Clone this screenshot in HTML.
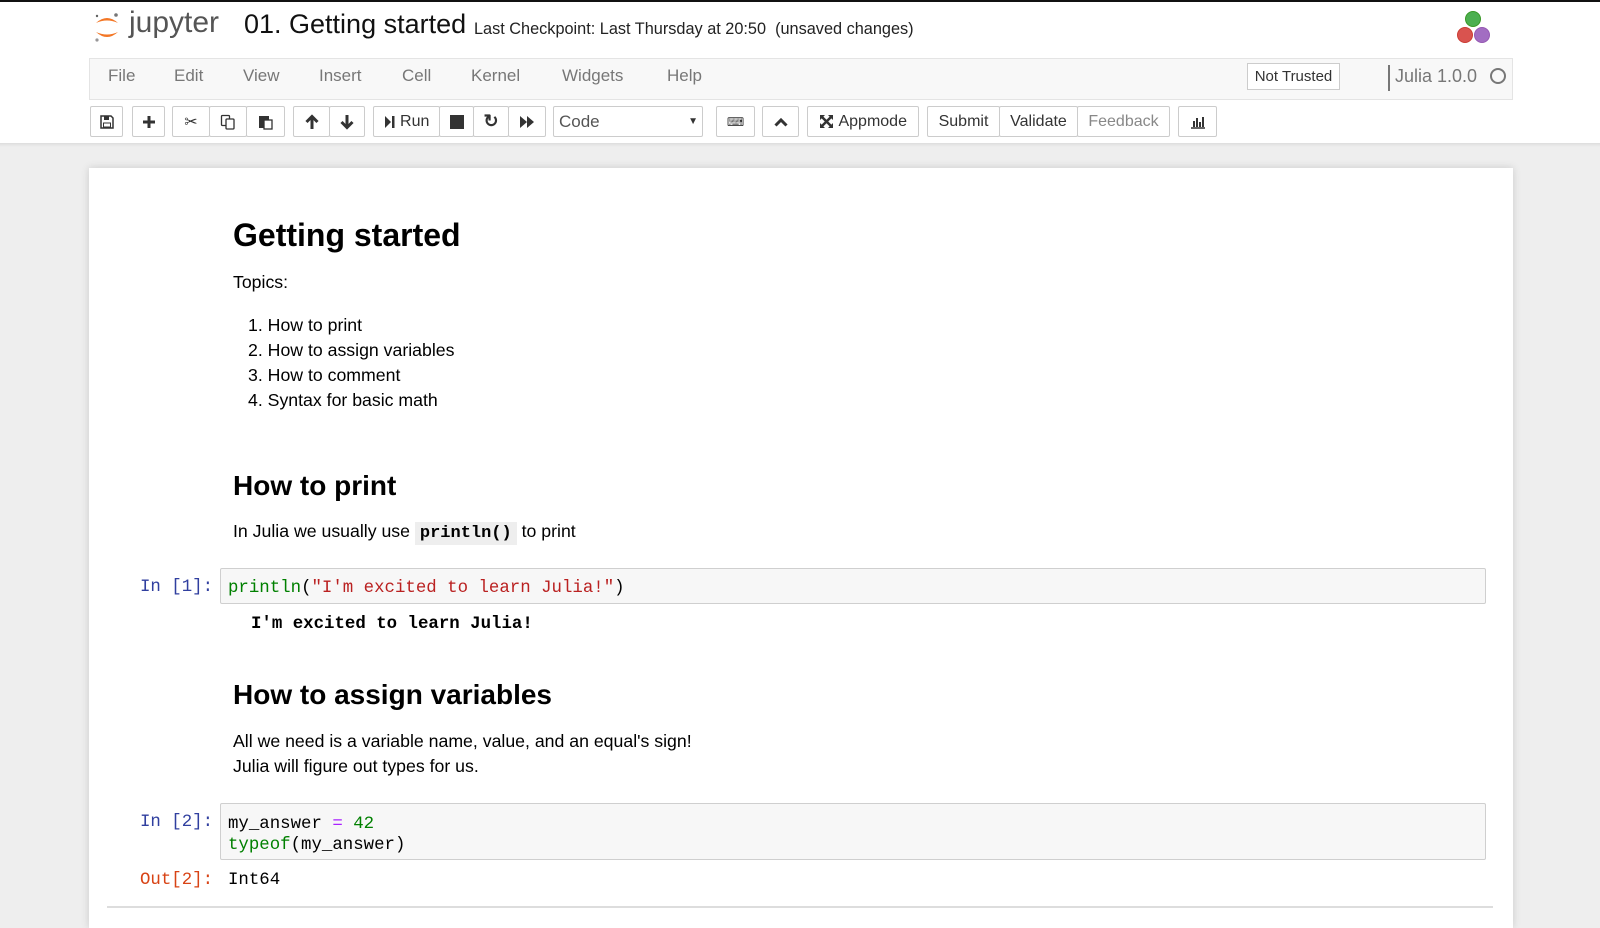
<!DOCTYPE html>
<html><head><meta charset="utf-8"><style>
*{box-sizing:border-box;margin:0;padding:0}
body{width:1600px;height:908px;overflow:hidden;background:#eee;font-family:"Liberation Sans",sans-serif;color:#000;position:relative}
.abs{position:absolute}
#hdr{position:absolute;left:0;top:0;width:1600px;height:58px;background:#fff;border-top:2px solid #111}
#menu{position:absolute;left:89px;top:58px;width:1424px;height:42px;background:#f8f8f8;border:1px solid #e4e4e4}
#menu span{position:absolute;top:7px;font-size:17px;color:#777}
#tbbg{position:absolute;left:0;top:58px;width:1600px;height:86px;background:#fff;z-index:-1}
.btn{position:absolute;top:106px;height:31px;border:1px solid #ccc;background:#fff;border-radius:2px;font-size:16px;display:flex;align-items:center;justify-content:center;color:#333}
.sh{position:absolute;left:0;top:143px;width:1600px;height:4px;background:linear-gradient(#ddd,#eee)}
#nb{position:absolute;left:89px;top:168px;width:1424px;height:760px;background:#fff;box-shadow:0 0 8px rgba(0,0,0,.15)}
.t{position:absolute;font-size:17.7px;color:#000;white-space:nowrap}
h1,h2{position:absolute;font-weight:bold;white-space:nowrap}
.mono{font-family:"Liberation Mono",monospace;font-size:17.4px}
.cell{position:absolute;left:220px;width:1266px;background:#f7f7f7;border:1px solid #cfcfcf;border-radius:2px}
.pr{position:absolute;left:140px;color:#303f9f}
</style></head><body>
<div id="tbbg"></div>
<div id="hdr">
<svg class="abs" style="left:92px;top:8px" width="30" height="34" viewBox="0 0 30 34"><path d="M4 13 Q15 3 26 13 Q15 8 4 13Z" fill="#f37726"/><path d="M4 22 Q15 32 26 22 Q15 27 4 22Z" fill="#f37726"/><circle cx="24" cy="5" r="1.8" fill="#767677"/><circle cx="5" cy="30" r="1.6" fill="#989798"/><circle cx="5" cy="6" r="1.2" fill="#616262"/></svg>
<div class="abs" style="left:129px;top:4px;font-size:30px;color:#555">jupyter</div>
<div class="abs" style="left:244px;top:7px;font-size:27px;color:#111">01. Getting started</div>
<div class="abs" style="left:474px;top:18px;font-size:16.3px;color:#222">Last Checkpoint: Last Thursday at 20:50 &nbsp;(unsaved changes)</div>
<svg class="abs" style="left:1455px;top:8px" width="38" height="36"><circle cx="18" cy="9" r="7.5" fill="#4caf50" stroke="#389826"/><circle cx="10" cy="25" r="7.5" fill="#d9534f" stroke="#cb3c33"/><circle cx="27" cy="25" r="7.5" fill="#a26dc2" stroke="#9558b2"/></svg>
</div>
<div id="menu">
<span style="left:18px">File</span><span style="left:84px">Edit</span><span style="left:153px">View</span><span style="left:229px">Insert</span><span style="left:312px">Cell</span><span style="left:381px">Kernel</span><span style="left:472px">Widgets</span><span style="left:577px">Help</span>
<div class="abs" style="left:1157px;top:4px;width:93px;height:27px;border:1px solid #ccc;background:#fff;font-size:15px;color:#333;text-align:center;line-height:25px">Not Trusted</div>
<div class="abs" style="left:1298px;top:6px;width:2px;height:26px;background:#777"></div>
<span style="left:1305px;top:7px;font-size:18px;color:#777">Julia 1.0.0</span>
<div class="abs" style="left:1400px;top:9px;width:16px;height:16px;border:2px solid #777;border-radius:50%"></div>
</div>
<div class="btn" style="left:90px;width:33px"><svg width="14" height="14" viewBox="0 0 14 14"><path d="M1 1h10l2 2v10H1z" fill="none" stroke="#333" stroke-width="1.5"/><rect x="4" y="1" width="5" height="4" fill="#333"/><rect x="3.5" y="8" width="7" height="4" fill="none" stroke="#333"/></svg></div>
<div class="btn" style="left:132px;width:33px"><svg width="14" height="14"><path d="M7 1v12M1 7h12" stroke="#333" stroke-width="3"/></svg></div>
<div class="btn" style="left:172px;width:38px">✂</div>
<div class="btn" style="left:209px;width:38px"><svg width="16" height="16"><rect x="1.5" y="1.5" width="8" height="10" rx="1" fill="none" stroke="#333" stroke-width="1.3"/><rect x="6" y="5" width="8" height="10" rx="1" fill="#fff" stroke="#333" stroke-width="1.3"/></svg></div>
<div class="btn" style="left:246px;width:39px"><svg width="16" height="16"><rect x="1" y="2" width="10" height="12" fill="#333"/><rect x="6" y="6" width="8" height="9" fill="#fff" stroke="#333" stroke-width="1.3"/></svg></div>
<div class="btn" style="left:293px;width:37px"><svg width="14" height="16"><path d="M7 15V3M1.5 8L7 2.5 12.5 8" fill="none" stroke="#333" stroke-width="3"/></svg></div>
<div class="btn" style="left:329px;width:36px"><svg width="14" height="16"><path d="M7 1v12M1.5 8L7 13.5 12.5 8" fill="none" stroke="#333" stroke-width="3"/></svg></div>
<div class="btn" style="left:373px;width:67px"><svg width="12" height="14"><path d="M1 1l6 6-6 6z" fill="#333"/><rect x="8" y="1" width="2.5" height="12" fill="#333"/></svg>&nbsp;Run</div>
<div class="btn" style="left:439px;width:35px"><svg width="14" height="14"><rect width="14" height="14" fill="#333"/></svg></div>
<div class="btn" style="left:473px;width:36px;font-weight:bold;font-size:18px">↻</div>
<div class="btn" style="left:508px;width:38px"><svg width="16" height="14"><path d="M1 1l7 6-7 6zM8 1l7 6-7 6z" fill="#333"/></svg></div>
<div class="btn" style="left:553px;width:150px;justify-content:flex-start;padding-left:5px;font-size:17px;color:#555">Code<span style="position:absolute;right:4px;font-size:10px;color:#333">▼</span></div>
<div class="btn" style="left:716px;width:39px;font-size:12px">⌨</div>
<div class="btn" style="left:762px;width:37px"><svg width="14" height="10"><path d="M1.5 8.5L7 3l5.5 5.5" fill="none" stroke="#333" stroke-width="3"/></svg></div>
<div class="btn" style="left:807px;width:112px"><svg width="15" height="15"><path d="M2 2l11 11M13 2L2 13" stroke="#333" stroke-width="2.5"/><path d="M1 1h5L1 6zM14 1v5L9 1zM1 14V9l5 5zM14 14H9l5-5z" fill="#333"/></svg>&nbsp;Appmode</div>
<div class="btn" style="left:927px;width:73px">Submit</div>
<div class="btn" style="left:999px;width:79px">Validate</div>
<div class="btn" style="left:1077px;width:93px;color:#888">Feedback</div>
<div class="btn" style="left:1178px;width:39px"><svg width="16" height="14"><path d="M1 13h14" stroke="#333" stroke-width="1.5"/><path d="M4 12V6M7 12V3M10 12V7M13 12V2" stroke="#333" stroke-width="2"/></svg></div>
<div class="sh"></div>
<div id="nb"></div>
<h1 style="left:233px;top:217px;font-size:32px">Getting started</h1>
<div class="t" style="left:233px;top:272px">Topics:</div>
<div class="t" style="left:248px;top:315px">1. How to print</div>
<div class="t" style="left:248px;top:340px">2. How to assign variables</div>
<div class="t" style="left:248px;top:365px">3. How to comment</div>
<div class="t" style="left:248px;top:390px">4. Syntax for basic math</div>
<h2 style="left:233px;top:470px;font-size:28px">How to print</h2>
<div class="t" style="left:233px;top:521px">In Julia we usually use <span class="mono" style="background:#eee;padding:2px 5px;font-weight:bold;font-size:17px">println()</span> to print</div>
<div class="pr mono" style="top:578px">In [1]:</div>
<div class="cell" style="top:568px;height:36px"><div class="mono" style="position:absolute;left:7px;top:10px"><span style="color:#008000">println</span>(<span style="color:#ba2121">"I'm excited to learn Julia!"</span>)</div></div>
<div class="mono abs" style="left:251px;top:615px;font-weight:bold">I'm excited to learn Julia!</div>
<h2 style="left:233px;top:679px;font-size:28px">How to assign variables</h2>
<div class="t" style="left:233px;top:731px">All we need is a variable name, value, and an equal's sign!</div>
<div class="t" style="left:233px;top:756px">Julia will figure out types for us.</div>
<div class="pr mono" style="top:813px">In [2]:</div>
<div class="cell" style="top:803px;height:57px"><div class="mono" style="position:absolute;left:7px;top:10px;line-height:21px">my_answer <span style="color:#aa22ff">=</span> <span style="color:#008000">42</span><br><span style="color:#008000">typeof</span>(my_answer)</div></div>
<div class="mono abs" style="left:140px;top:871px;color:#d84315">Out[2]:</div>
<div class="mono abs" style="left:228px;top:871px">Int64</div>
<div class="abs" style="left:107px;top:906px;width:1386px;height:2px;background:#ddd"></div>
</body></html>
